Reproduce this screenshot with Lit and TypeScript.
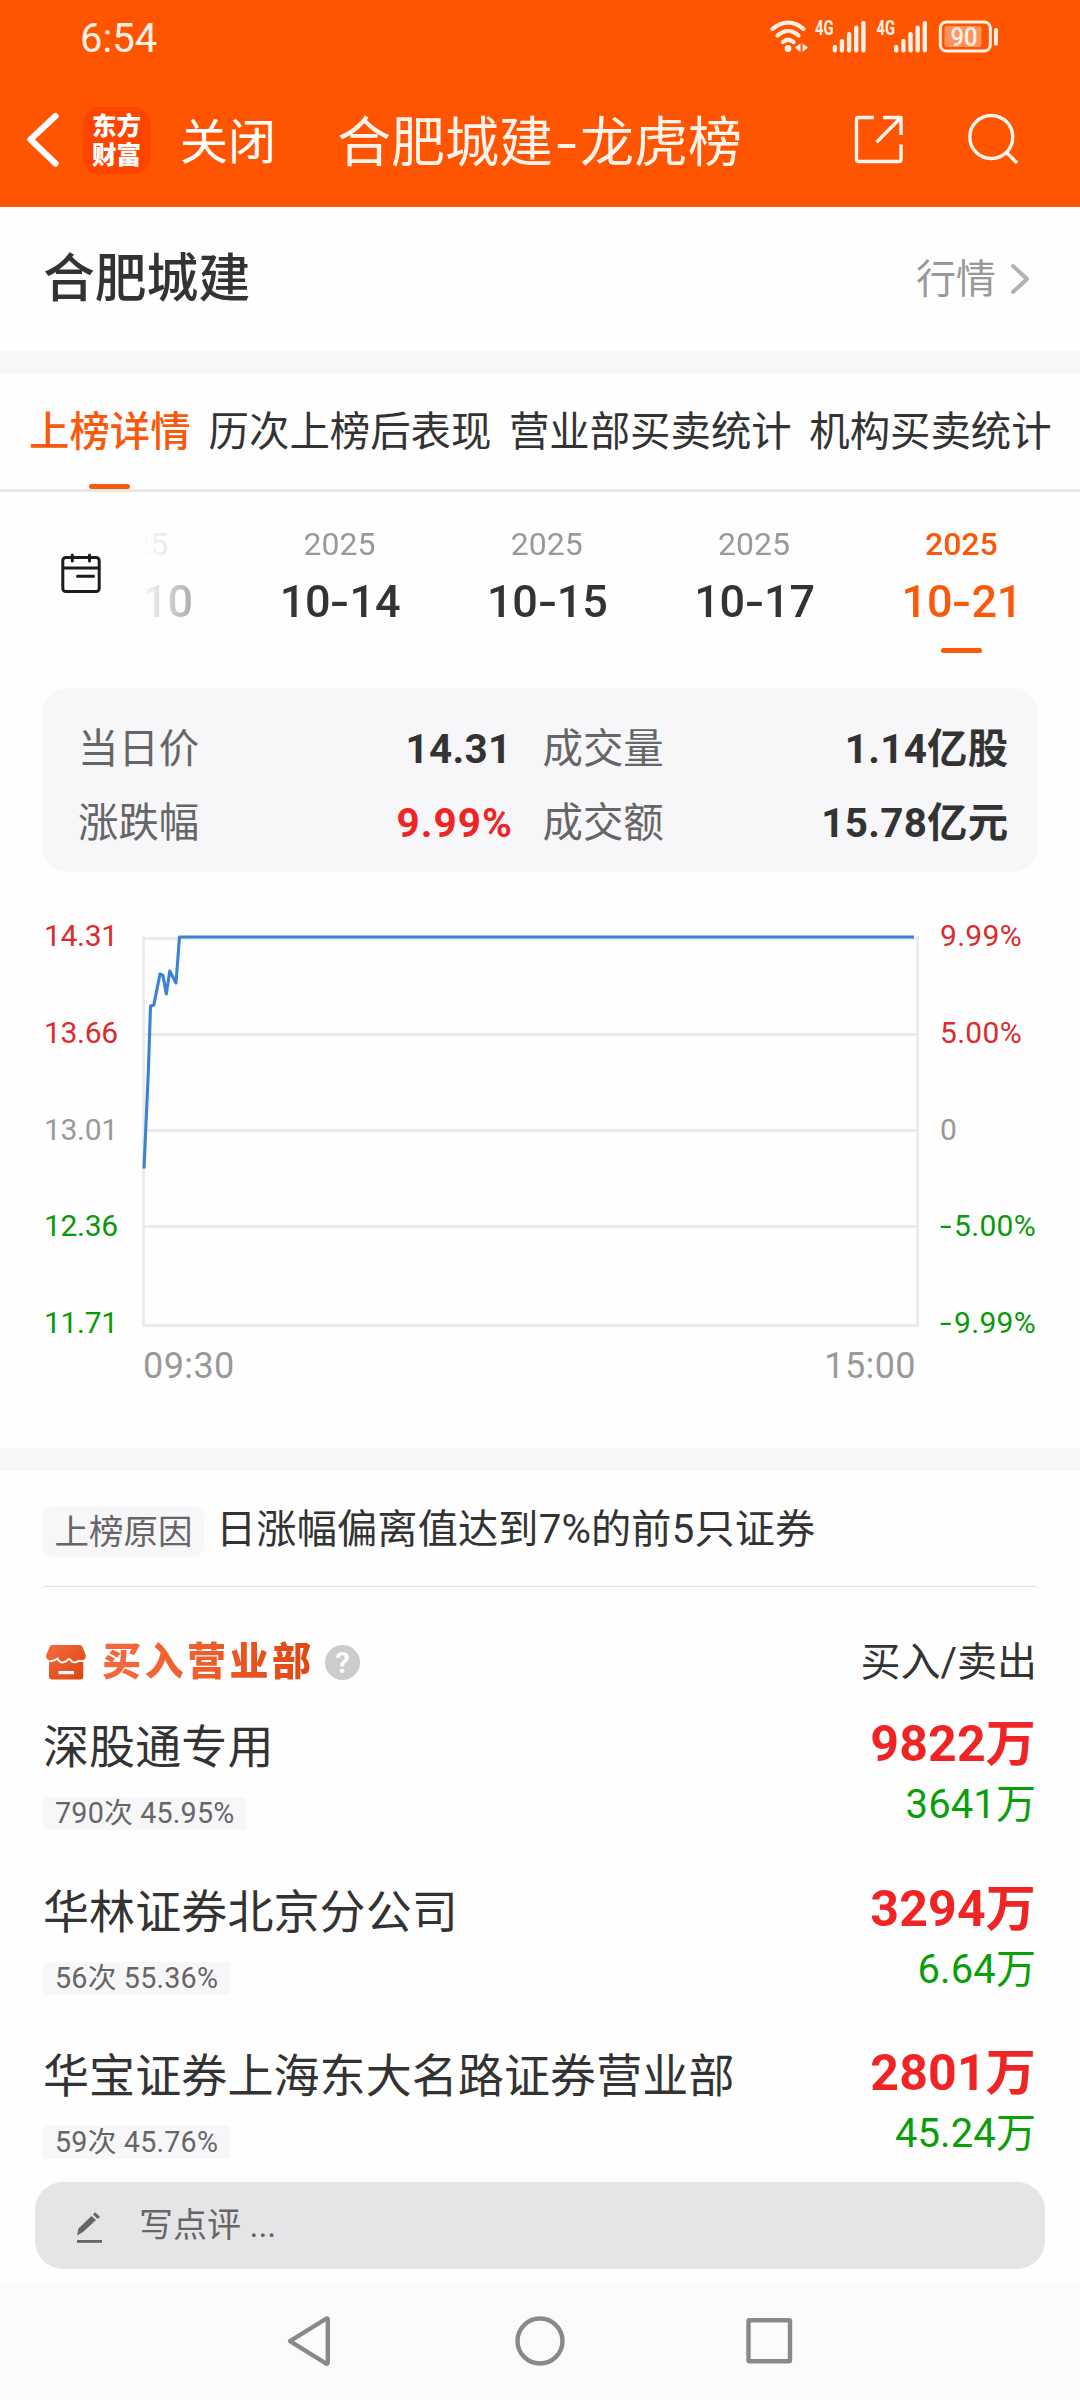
import { LitElement, html, css, svg } from "lit";
import { customElement } from "lit/decorators.js";
import { classMap } from "lit/directives/class-map.js";

const TABS = ["上榜详情", "历次上榜后表现", "营业部买卖统计", "机构买卖统计"];
const DATES = ["10-10", "10-14", "10-15", "10-17", "10-21"];
const STATS = [
  { label: "当日价", value: "14.31", tone: "" },
  { label: "成交量", value: "1.14亿股", tone: "" },
  { label: "涨跌幅", value: "9.99%", tone: "up" },
  { label: "成交额", value: "15.78亿元", tone: "" },
];
const LEVELS = [
  { price: "14.31", pct: "9.99%", tone: "up" },
  { price: "13.66", pct: "5.00%", tone: "up" },
  { price: "13.01", pct: "0", tone: "flat" },
  { price: "12.36", pct: "-5.00%", tone: "down" },
  { price: "11.71", pct: "-9.99%", tone: "down" },
];
const SEATS = [
  { name: "深股通专用", tag: "790次 45.95%", buy: "9822万", sell: "3641万" },
  { name: "华林证券北京分公司", tag: "56次 55.36%", buy: "3294万", sell: "6.64万" },
  { name: "华宝证券上海东大名路证券营业部", tag: "59次 45.76%", buy: "2801万", sell: "45.24万" },
];

@customElement("app-header")
export class AppHeader extends LitElement {
  static styles = css`
    :host { display: block; height: 207px; background: #ff5500; color: #fff; }
    .status { display: flex; height: 73px; padding: 0 80px 0 80px; justify-content: space-between; }
    .time { font-size: 40px; line-height: 77px; color: #fff0e6; }
    .status svg { display: block; }
    .bar { display: flex; height: 134px; align-items: center; }
    .back { width: 83px; }
    .back svg { display: block; }
    .logo {
      width: 67px; height: 67px; box-sizing: border-box; padding: 3px 0 0 9px; border-radius: 16px;
      background: #ff4400; font-size: 24.500px; font-weight: 900; line-height: 29.500px; white-space: pre;
      font-family: "Noto Sans CJK SC", sans-serif;
    }
    .close { align-self: flex-start; font-size: 48px; line-height: 139px; margin-left: 30px; width: 157px; }
    .title { align-self: flex-start; font-size: 54px; line-height: 142px; width: 480px; color: #fff3ee; white-space: nowrap; }
    .dash { padding: 0 6px 0 6px; display: inline-block; transform: scaleX(1.35); }
    .tools { flex: 1; }
    .tools svg { display: block; }
  `;
  private bars(x: number) {
    const tops = [45, 39, 32, 25.5, 21];
    return tops.map((t, i) => svg`<rect x=${x + i * 7.15} y=${t} width="4.4" height=${52.4 - t} rx="2"/>`);
  }
  render() {
    return html`
      <div class="status">
        <div class="time">6:54</div>
        <svg width="232" height="73" viewBox="768 0 232 73" fill="#fff0e6">
          <g fill="none" stroke="#fff0e6" stroke-width="4.2" stroke-linecap="round">
            <path d="M772.5 29C782 20.500 794 20.500 803.500 29"/>
            <path d="M777.500 35.500C784.500 29.500 792 29.500 798.500 35.500"/>
            <path d="M783 42C786.500 39 790 39 793.500 42"/>
          </g>
          <circle cx="788" cy="48.500" r="3.400"/>
          <path d="M800.500 43.500v8.500l-5.800-4.500zM802.500 43.500v8.500l5.500-4.500z"/>
          <text x="815" y="35" font-size="19.500" font-weight="700" textLength="18.500" lengthAdjust="spacingAndGlyphs">4G</text>
          ${this.bars(832.6)}
          <text x="876.500" y="35" font-size="19.500" font-weight="700" textLength="18.500" lengthAdjust="spacingAndGlyphs">4G</text>
          ${this.bars(894)}
          <rect x="940.300" y="22" width="50" height="29" rx="6" fill="none" stroke="#fff0e6" stroke-width="3"/>
          <rect x="944.500" y="26" width="37" height="21" rx="3" opacity=".4"/>
          <text x="950.500" y="46" font-size="26" font-weight="500" textLength="27" lengthAdjust="spacingAndGlyphs">90</text>
          <rect x="994" y="28" width="4" height="17.500" rx="1.500"/>
        </svg>
      </div>
      <div class="bar">
        <div class="back">
          <svg width="83" height="134" viewBox="0 73 83 134" fill="none" stroke="#fff" stroke-width="6.200" stroke-linejoin="round" stroke-linecap="round">
            <path d="M55.500 116L30.500 139.500L55.500 163.500"/>
          </svg>
        </div>
        <div class="logo">东方
财富</div>
        <div class="close">关闭</div>
        <div class="title">合肥城建<span class="dash">-</span>龙虎榜</div>
        <div class="tools">
          <svg width="263" height="134" viewBox="817 73 263 134" fill="none" stroke="#fff6f2" stroke-width="3.400">
            <path d="M873.800 117.500H858.500a2 2 0 0 0-2 2V159.500a2 2 0 0 0 2 2H899a2 2 0 0 0 2-2V144.500M883 117.500H901V135M900 118.500L876.500 142.300" stroke-linejoin="round"/>
            <circle cx="991.300" cy="137" r="21.500"/>
            <path d="M1006.500 152.500L1017 163"/>
          </svg>
        </div>
      </div>`;
  }
}

@customElement("price-chart")
export class PriceChart extends LitElement {
  static styles = css`
    :host { display: grid; grid-template-columns: 99px 777px 1fr; margin-left: 43px; padding-top: 16px; height: 560px; }
    .axis { font-size: 30px; line-height: 96.8px; }
    .left { padding-left: 1px; letter-spacing: -.3px; }
    .right { padding-left: 21px; letter-spacing: .3px; }
    .up { color: #de2a2a; }
    .down { color: #0a990a; }
    .flat { color: #999; }
    .plot svg { display: block; }
    .times { display: flex; justify-content: space-between; font-size: 36px; line-height: 66px; color: #999; padding: 0 3px 0 1px; letter-spacing: .4px; }
    .minus { display: inline-block; transform: scaleX(1.4); transform-origin: left; padding-right: 5.500px; }
  `;
  render() {
    return html`
      <div class="axis left">${LEVELS.map((l) => html`<div class=${l.tone}>${l.price}</div>`)}</div>
      <div class="plot">
        <svg width="777" height="445" viewBox="142 888 777 445" fill="none">
          <path stroke="#ebebeb" stroke-width="3" d="M143.500 936V1327M917.500 936V1326M142 938.500H918M142 1034.500H918M142 1130.500H918M142 1226.500H918M142 1325.500H918"/>
          <path stroke="#3b81d6" stroke-width="3.100" stroke-linejoin="round"
            d="M144 1168.500L148.400 1070L150.500 1006L153.800 1005L160 974L163 975.500L166.300 994L169.800 971L176 983L179.500 937H914"/>
        </svg>
        <div class="times"><span>09:30</span><span>15:00</span></div>
      </div>
      <div class="axis right">
        ${LEVELS.map((l) => html`<div class=${l.tone}>${l.pct.startsWith("-")
          ? html`<span class="minus">-</span>${l.pct.slice(1)}` : l.pct}</div>`)}
      </div>`;
  }
}

@customElement("app-root")
export class AppRoot extends LitElement {
  static styles = css`
    :host {
      display: block; width: 1080px; height: 2400px; overflow: hidden; background: #fefefe; color: #333;
      font-family: Roboto, "Noto Sans CJK SC", sans-serif;
    }
    .stock { display: flex; height: 144px; align-items: center; justify-content: space-between; padding: 0 49px 0 43px; line-height: 144px; }
    .name { font-size: 51.800px; font-weight: 500; padding-top: 2px; }
    .quote { display: flex; align-items: center; font-size: 40px; color: #999; gap: 13px; }
    .quote span { padding-top: 1px; }
    .band { height: 23px; background: #f7f7fa; }
    .tabs { display: flex; height: 115px; gap: 17.600px; padding-left: 29px; border-bottom: 3px solid #e8e8e8; }
    .tab { position: relative; font-size: 40.400px; line-height: 118px; white-space: nowrap; }
    .tab.active { color: #f9590a; font-weight: 500; width: 162px; }
    .tab.active::after { content: ""; position: absolute; left: 60px; bottom: 0; width: 41px; height: 5px; border-radius: 3px; background: #f9590a; }
    .dates { display: flex; height: 196px; overflow: hidden; }
    .calendar { width: 135px; flex: none; }
    .calendar svg { display: block; }
    .strip {
      display: flex; flex: 1; padding-top: 32px; overflow: hidden; justify-content: flex-end; padding-right: 15px;
      -webkit-mask-image: linear-gradient(90deg, transparent 4px, rgba(0,0,0,.4) 58px, #000 110px);
      mask-image: linear-gradient(90deg, transparent 4px, rgba(0,0,0,.4) 58px, #000 110px);
    }
    .date { flex: none; width: 207.300px; display: flex; flex-direction: column; align-items: center; }
    .year { font-size: 32px; line-height: 40px; color: #999; }
    .day { font-size: 45px; font-weight: 500; line-height: 50px; margin-top: 13px; letter-spacing: -.2px; padding-left: 1px; }
    .dash { display: inline-block; transform: scaleX(1.25); padding: 0 2px; }
    .date.active .year { color: #f9590a; font-weight: 500; }
    .date.active .day { color: #f9590a; }
    .date.active::after { content: ""; margin-top: 21px; width: 41px; height: 5px; border-radius: 3px; background: #f9590a; }
    .stats {
      display: grid; grid-template-columns: 433.500px 466px; column-gap: 31px; grid-auto-rows: 74px; box-sizing: border-box;
      height: 184px; margin: 0 43px; padding: 25px 0 0 35px; background: #f7f7fa; border-radius: 23px;
    }
    .stat { display: flex; justify-content: space-between; font-size: 40.400px; line-height: 74px; color: #666; }
    .value { color: #333; font-weight: 700; letter-spacing: .3px; }
    .value.up { color: #ef2525; letter-spacing: 1.100px; margin-right: -1.500px; }
    .reason { display: flex; align-items: center; height: 115px; margin: 0 43px; border-bottom: 1px solid #e3e3e3; font-size: 40.200px; }
    .reason-tag { height: 51px; line-height: 52px; width: 161px; text-align: center; font-size: 34.500px; border-radius: 11px; background: #f7f7fa; color: #666; margin: 6px 12px 0 0; }
    .reason-text { padding-bottom: 6px; letter-spacing: .15px; }
    .head { display: flex; align-items: center; box-sizing: border-box; height: 128px; padding: 22px 43px 0; }
    .head svg { display: block; margin-left: 3px; }
    .head-title {
      margin-left: 16px; font-size: 39px; font-weight: 900; letter-spacing: 3.500px; line-height: 56px; width: 223px;
      background: linear-gradient(90deg, #f5683f, #f0602f 40%, #dc4510); -webkit-background-clip: text; background-clip: text; color: transparent;
    }
    .help { width: 35px; height: 35px; border-radius: 50%; background: #ccc; color: #fff; font-size: 29px; font-weight: 700; line-height: 36px; text-align: center; }
    .head-right { margin-left: auto; font-size: 40px; line-height: 60px; padding-top: 2px; }
    .rows { height: 467px; overflow: hidden; }
    .row { display: flex; justify-content: space-between; height: 164.500px; padding: 0 43px; }
    .seat { font-size: 46px; line-height: 65px; letter-spacing: .1px; }
    .seat-tag { display: inline-block; margin-top: 17px; padding: 0 12px; height: 33px; line-height: 33px; font-size: 28.700px; letter-spacing: .2px; border-radius: 4px; background: #f7f7fa; color: #666; }
    .amounts { text-align: right; padding-right: 1px; }
    .buy { font-size: 50px; font-weight: 700; line-height: 58px; color: #ef2525; letter-spacing: .2px; }
    .sell { font-size: 40px; line-height: 63px; color: #0a9e0a; letter-spacing: .1px; }
    .comment { display: flex; align-items: center; height: 87px; margin: 0 35px 13px; border-radius: 28px; background: #e5e5e7; color: #666; font-size: 34px; }
    .comment svg { display: block; margin: 0 36px 0 40px; }
    .comment span { padding-bottom: 6px; }
    .nav { height: 118px; background: #fbfbfb; }
    .nav svg { display: block; }
  `;

  private day(d: string) {
    const [m, n] = d.split("-");
    return html`${m}<span class="dash">-</span>${n}`;
  }

  render() {
    return html`
      <app-header></app-header>
      <div class="stock">
        <div class="name">合肥城建</div>
        <div class="quote"><span>行情</span>
          <svg width="22" height="34" viewBox="0 0 22 34" fill="none" stroke="#b2b2b2" stroke-width="4" stroke-linecap="round" stroke-linejoin="round"><path d="M4 4L18 17L4 30"/></svg>
        </div>
      </div>
      <div class="band"></div>
      <div class="tabs">
        ${TABS.map((t, i) => html`<div class=${classMap({ tab: true, active: i === 0 })}>${t}</div>`)}
      </div>
      <div class="dates">
        <div class="calendar">
          <svg width="135" height="196" viewBox="0 492 135 196" fill="none" stroke="#1c1c1c" stroke-width="3" stroke-linecap="round">
            <rect x="62.800" y="557.500" width="36.400" height="34" rx="3"/>
            <path d="M63 568H99M72.300 555V561M89.500 555V561M77.500 576.300H93.500"/>
          </svg>
        </div>
        <div class="strip">
          ${DATES.map((d, i) => html`
            <div class=${classMap({ date: true, active: i === DATES.length - 1 })}>
              <div class="year">2025</div>
              <div class="day">${this.day(d)}</div>
            </div>`)}
        </div>
      </div>
      <div class="stats">
        ${STATS.map((s) => html`<div class="stat"><span>${s.label}</span><span class="value ${s.tone}">${s.value}</span></div>`)}
      </div>
      <price-chart></price-chart>
      <div class="band"></div>
      <div class="reason"><div class="reason-tag">上榜原因</div><div class="reason-text">日涨幅偏离值达到7%的前5只证券</div></div>
      <div class="head">
        <svg width="40" height="38" viewBox="0 0 40 38">
          <defs><linearGradient id="g" x1="0" y1="0" x2="1" y2="1"><stop offset="0" stop-color="#f6693f"/><stop offset="1" stop-color="#dc4510"/></linearGradient></defs>
          <path fill="url(#g)" fill-rule="evenodd" d="M6.500 2H33.500c1.500 0 2.500 .8 3 2L39.600 11.500c.8 3-.8 5-2.300 5.800V33.500c0 2-1 3-3 3H6c-2 0-3-1-3-3V17.300C1 16.500-.5 14.500 .4 11.500L3.500 4C4 2.800 5 2 6.500 2zM12.500 28v3.200h15.500v-3.200z"/>
          <path d="M0 17.300C4 18.800 8 18.500 11.300 15.500C13 18.500 15.500 20 18 19.200Q20.500 18.500 22 16.500Q23.300 15.500 24.500 17C26 19.500 29.500 20.500 32.500 17.800Q36 18.500 40 17.300" fill="none" stroke="#fefefe" stroke-width="1.900"/>
        </svg>
        <div class="head-title">买入营业部</div>
        <div class="help">?</div>
        <div class="head-right">买入/卖出</div>
      </div>
      <div class="rows">
        ${SEATS.map((s) => html`
          <div class="row">
            <div>
              <div class="seat">${s.name}</div>
              <div class="seat-tag">${s.tag}</div>
            </div>
            <div class="amounts">
              <div class="buy">${s.buy}</div>
              <div class="sell">${s.sell}</div>
            </div>
          </div>`)}
      </div>
      <div class="comment">
        <svg width="28" height="34" viewBox="0 0 28 34" fill="#666">
          <path d="M2 26.500l1.500-7L16.500 7l4.500 4L8 23z"/>
          <path d="M18 5.500l2-2.300 5 4.500-2.300 2.300z"/>
          <rect x="2" y="31" width="25" height="2.800"/>
        </svg>
        <span>写点评 ...</span>
      </div>
      <div class="nav">
        <svg width="1080" height="118" viewBox="0 2282 1080 118" fill="none" stroke="#898989" stroke-width="4.400" stroke-linejoin="round">
          <path d="M290 2341.200L326.500 2318.500Q327.800 2318 327.800 2320V2362Q327.800 2364.500 326 2363.500Z"/>
          <circle cx="540" cy="2341" r="22.500"/>
          <rect x="748.500" y="2320.200" width="41.500" height="41" rx="1"/>
        </svg>
      </div>`;
  }
}
